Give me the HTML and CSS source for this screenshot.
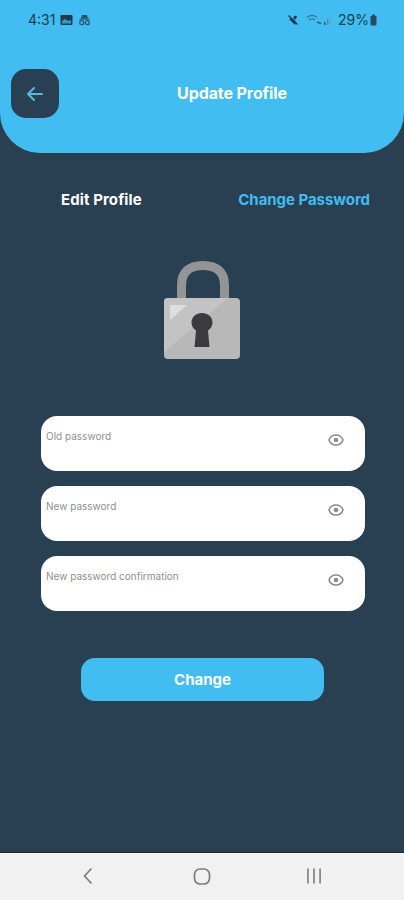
FILE: index.html
```html
<!DOCTYPE html>
<html lang="en">
<head>
<meta charset="utf-8">
<title>Update Profile</title>
<link rel="stylesheet" href="styles.css">
</head>
<body>
<div class="screen">
  <header class="header">
    <div class="status">
      <div class="status-left">
        <span class="time">4:31</span>
        <svg class="st-icon" width="13" height="12" viewBox="0 0 13 12"><rect x="0.500" y="1" width="12" height="10" rx="1" fill="#1f3a4d"/><path d="M2 7l3-2 3 2 3-1v3.500H2z" fill="#41bdf2" opacity=".75"/></svg>
        <svg class="st-icon" width="13" height="12" viewBox="0 0 13 12" fill="#2a5068"><path d="M4 1h5l1 3.500H3z"/><rect x="1.500" y="4.500" width="10" height="1.200"/><circle cx="3.700" cy="8.700" r="2" fill="none" stroke="#2a5068" stroke-width="1.200"/><circle cx="9.300" cy="8.700" r="2" fill="none" stroke="#2a5068" stroke-width="1.200"/></svg>
      </div>
      <div class="status-right">
        <svg width="12" height="12" viewBox="0 0 12 12"><path d="M2 5l3-1 4 4-1 3z" fill="#1a3547"/><path d="M6 3l3-1.500L10 3 8 6z" fill="#1a3547"/><path d="M1.500 1.500l9 9" stroke="#1a3547" stroke-width="1.300"/></svg>
        <svg class="signal" width="27" height="12" viewBox="0 0 27 12" fill="none"><path d="M1 3.500c3-2.500 7-2.500 10 0M3 6c2-1.500 4-1.500 6 0" stroke="#3f7590" stroke-width="1.200"/><path d="M11 8l4 1.500" stroke="#2d5a72" stroke-width="1.500"/><rect x="18" y="8" width="1.500" height="3" fill="#2d5a72"/><rect x="21" y="5" width="1.500" height="6" fill="#4d8aa8"/><rect x="24" y="2" width="1.500" height="9" fill="#6aa6c4"/></svg>
        <span class="battery">29%</span>
        <svg width="7" height="12" viewBox="0 0 7 12" fill="#2a4a5e"><rect x="2" y="0.500" width="3" height="2"/><rect x="0.500" y="2" width="6" height="9.500" rx="1"/></svg>
      </div>
    </div>
    <div class="titlebar">
      <button class="back" aria-label="Back">
        <svg width="20" height="20" viewBox="0 0 20 20" fill="none" stroke="#58b8e2" stroke-width="2" stroke-linecap="round" stroke-linejoin="round"><path d="M17 10H3M9 4l-6 6 6 6"/></svg>
      </button>
      <h1 class="title">Update Profile</h1>
    </div>
  </header>

  <main class="content">
    <nav class="tabs">
      <span class="tab tab-edit">Edit Profile</span>
      <span class="tab tab-active">Change Password</span>
    </nav>

    <div class="lock-wrap">
      <svg width="78" height="102" viewBox="0 0 78 102">
        <path d="M18.500 44V27C18.500 14 26 7.500 40 7.500S61.500 14 61.500 27v17" fill="none" stroke="#929495" stroke-width="9"/>
        <rect x="1" y="40" width="76" height="61" rx="4" fill="#b8b8b8"/>
        <path d="M1 44a4 4 0 0 1 4-4h60L1 94z" fill="#c3c3c3"/>
        <path d="M7 47h17L7 62z" fill="#dedede"/>
        <path d="M39 55c6 0 10.500 4 10.500 9.500 0 3.800-2 6.300-4.500 8L46.500 89h-15L33 72.500c-2.500-1.700-4.500-4.200-4.500-8C28.500 59 33 55 39 55z" fill="#3b3b3d"/>
      </svg>
    </div>

    <form class="fields">
      <div class="field"><span class="label">Old password</span><svg class="eye" width="16" height="12" viewBox="0 0 16 12"><path d="M8 1C4.500 1 2 3.200 1 6c1 2.800 3.500 5 7 5s6-2.200 7-5c-1-2.800-3.500-5-7-5z" fill="none" stroke="#8b8b8b" stroke-width="1.600"/><circle cx="8" cy="6" r="2.300" fill="#8b8b8b"/></svg></div>
      <div class="field"><span class="label">New password</span><svg class="eye" width="16" height="12" viewBox="0 0 16 12"><path d="M8 1C4.500 1 2 3.200 1 6c1 2.800 3.500 5 7 5s6-2.200 7-5c-1-2.800-3.500-5-7-5z" fill="none" stroke="#8b8b8b" stroke-width="1.600"/><circle cx="8" cy="6" r="2.300" fill="#8b8b8b"/></svg></div>
      <div class="field"><span class="label">New password confirmation</span><svg class="eye" width="16" height="12" viewBox="0 0 16 12"><path d="M8 1C4.500 1 2 3.200 1 6c1 2.800 3.500 5 7 5s6-2.200 7-5c-1-2.800-3.500-5-7-5z" fill="none" stroke="#8b8b8b" stroke-width="1.600"/><circle cx="8" cy="6" r="2.300" fill="#8b8b8b"/></svg></div>
    </form>

    <button class="change">Change</button>
  </main>

  <footer class="navbar">
    <svg width="12" height="18" viewBox="0 0 12 18" fill="none" stroke="#7d7d7d" stroke-width="1.700"><path d="M9.500 1.500L2.500 9l7 7.500"/></svg>
    <svg class="nav-home" width="18" height="17" viewBox="0 0 18 17" fill="none" stroke="#7d7d7d" stroke-width="1.700"><rect x="1.500" y="1" width="15" height="15" rx="5.500"/></svg>
    <svg width="16" height="16" viewBox="0 0 16 16" fill="#8a8a8a"><rect x="1" y="0.500" width="1.800" height="15"/><rect x="7.100" y="0.500" width="1.800" height="15"/><rect x="13.200" y="0.500" width="1.800" height="15"/></svg>
  </footer>
</div>
</body>
</html>
```
FILE: styles.css
```css
* { box-sizing: border-box; }
html, body { margin: 0; padding: 0; }
body { font-family: Inter, "Liberation Sans", sans-serif; background: #293f52; }
.screen { width: 404px; height: 900px; display: flex; flex-direction: column; background: #293f52; overflow: hidden; }

.header { height: 153px; flex: none; background: #41bdf2; border-radius: 0 0 40px 40px; }
.status { height: 40px; padding: 11px 27px 0 28px; display: flex; justify-content: space-between; align-items: flex-start; }
.status-left, .status-right { display: flex; align-items: center; height: 18px; }
.status-left { gap: 5px; }
.status-right { gap: 3px; }
.time, .battery { font-size: 14px; color: #1d3b4e; line-height: 18px; }
.battery { margin-left: 2px; margin-right: -2px; }
.signal { margin-left: 4px; }

.titlebar { height: 49px; margin-top: 29px; padding-left: 11px; display: flex; align-items: center; }
.back { flex: none; width: 48px; height: 49px; padding: 0; border: 0; border-radius: 15px; background: #293f52; display: flex; align-items: center; justify-content: center; }
.title { flex: 1; margin: 0 0 2px; padding-left: 1px; text-align: center; font-size: 16px; font-weight: 700; color: #fff; letter-spacing: -0.1px; }

.content { flex: 1; display: flex; flex-direction: column; }
.tabs { height: 92px; display: flex; justify-content: space-between; align-items: center; padding: 0 34px 0 61px; }
.tab { font-size: 15px; font-weight: 700; }
.tab-edit { color: #fff; letter-spacing: 0.1px; }
.tab-active { color: #41bdf2; letter-spacing: -0.05px; }

.lock-wrap { display: flex; justify-content: center; margin-top: 13px; height: 102px; }

.fields { margin: 56px 39px 0 41px; display: flex; flex-direction: column; gap: 15px; }
.field { height: 55px; background: #fff; border-radius: 16px; padding: 14px 21px 0 5px; display: flex; justify-content: space-between; align-items: flex-start; }
.label { font-size: 10px; line-height: 13px; color: #8f8f8f; }
.eye { margin-top: 4px; }

.change { display: block; width: 243px; height: 43px; margin: 47px 0 0 81px; padding: 0; border: 0; border-radius: 14px; background: #41bdf2; color: #fff; font: 700 15px Inter, "Liberation Sans", sans-serif; }

.navbar { height: 47px; flex: none; background: #f1f1f1; border-top: 1px solid #fff; box-shadow: 0 -1px 0 #13233c; display: flex; align-items: center; justify-content: center; gap: 97px; padding-bottom: 2px; }
.nav-home { margin: 0 -2px 0 2px; }
```
